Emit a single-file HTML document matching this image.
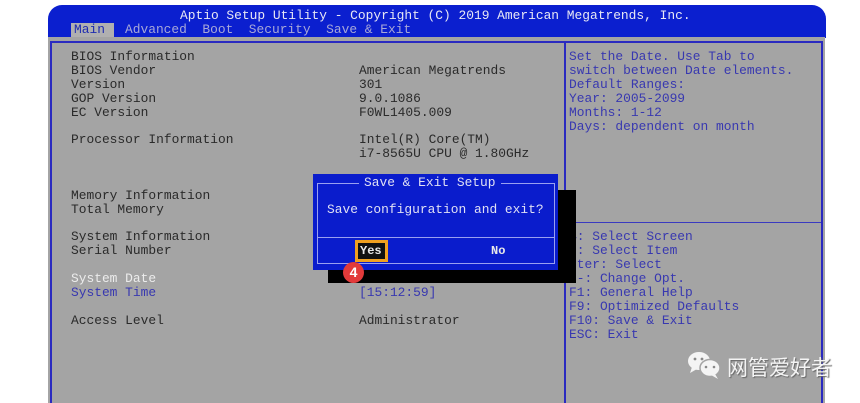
<!DOCTYPE html>
<html><head><meta charset="utf-8"><style>
*{margin:0;padding:0;box-sizing:border-box}
html,body{width:860px;height:403px;overflow:hidden}
body{background:#fff;position:relative;font-family:"Liberation Mono",monospace;font-size:12.9px;}
.a{position:absolute;white-space:pre;line-height:14px}
.d{color:#2a2a2a}.b{color:#3838b0}.w{color:#ececec}
</style></head><body>
<div style="position:absolute;left:48px;top:5px;width:778px;height:33px;background:#0b1fcf;border-radius:14px 14px 0 0"></div>
<div class="a" style="left:180px;top:9px;color:#e8e8f4">Aptio Setup Utility - Copyright (C) 2019 American Megatrends, Inc.</div>
<div style="position:absolute;left:71px;top:23px;width:43px;height:14px;background:#b0b0b0"></div>
<div class="a" style="left:74px;top:23px;color:#1e2bb0">Main</div>
<div class="a" style="left:125px;top:23px;color:#a8a8d8">Advanced  Boot  Security  Save &amp; Exit</div>
<div style="position:absolute;left:48px;top:37px;width:777px;height:366px;background:#a4a4a4"></div>
<div style="position:absolute;left:50px;top:41px;width:773px;height:362px;border:2px solid #2a2ac0;border-bottom:none"></div>
<div style="position:absolute;left:564px;top:41px;width:2px;height:362px;background:#2a2ac0"></div>
<div style="position:absolute;left:566px;top:222px;width:255px;height:1px;background:#3a3ac0"></div>
<div class="a d" style="left:71px;top:50px">BIOS Information
BIOS Vendor
Version
GOP Version
EC Version</div>
<div class="a d" style="left:71px;top:133px">Processor Information</div>
<div class="a d" style="left:71px;top:189px">Memory Information
Total Memory</div>
<div class="a d" style="left:71px;top:230px">System Information
Serial Number</div>
<div class="a w" style="left:71px;top:272px">System Date</div>
<div class="a b" style="left:71px;top:286px">System Time</div>
<div class="a d" style="left:71px;top:314px">Access Level</div>
<div class="a d" style="left:359px;top:64px">American Megatrends
301
9.0.1086
F0WL1405.009</div>
<div class="a d" style="left:359px;top:133px">Intel(R) Core(TM)
i7-8565U CPU @ 1.80GHz</div>
<div class="a b" style="left:359px;top:286px">[15:12:59]</div>
<div class="a d" style="left:359px;top:314px">Administrator</div>
<div class="a b" style="left:569px;top:50px">Set the Date. Use Tab to
switch between Date elements.
Default Ranges:
Year: 2005-2099
Months: 1-12
Days: dependent on month</div>
<div class="a b" style="left:569px;top:230px">→: Select Screen
↓: Select Item
nter: Select
/-: Change Opt.
F1: General Help
F9: Optimized Defaults
F10: Save &amp; Exit
ESC: Exit</div>
<div style="position:absolute;left:328px;top:190px;width:248px;height:93px;background:#000"></div>
<div style="position:absolute;left:313px;top:174px;width:245px;height:96px;background:#0a1ccc"></div>
<div style="position:absolute;left:317px;top:183px;width:238px;height:81px;border:1px solid #9aa0f0"></div>
<div style="position:absolute;left:318px;top:237px;width:236px;height:1px;background:#9aa0f0"></div>
<div class="a" style="left:359px;top:176px;background:#0a1ccc;color:#e0e0f4;padding:0 5px">Save &amp; Exit Setup</div>
<div class="a" style="left:327px;top:203px;color:#e0e0f4">Save configuration and exit?</div>
<div style="position:absolute;left:355px;top:240px;width:33px;height:22px;border:3px solid #f0a020;background:#111"></div>
<div class="a" style="left:360px;top:244px;color:#e8e8e8;font-weight:bold;font-size:12px">Yes</div>
<div class="a" style="left:491px;top:244px;color:#e8e8e8;font-weight:bold;font-size:12px">No</div>
<div style="position:absolute;left:343px;top:262px;width:21px;height:21px;border-radius:50%;background:#e23a3a;color:#fff;font-family:'Liberation Sans',sans-serif;font-weight:bold;font-size:14px;text-align:center;line-height:21px">4</div>
<svg style="position:absolute;left:687px;top:350px" width="36" height="30" viewBox="0 0 36 30">
<ellipse cx="12" cy="11" rx="11" ry="9" fill="#f4f4f4"/><path d="M5 17 L3 23 L10 19Z" fill="#f4f4f4"/>
<ellipse cx="23" cy="18" rx="10" ry="8.5" fill="#f4f4f4" stroke="#a4a4a4" stroke-width="1.5"/><path d="M28 24 L31 29 L24 25Z" fill="#f4f4f4"/>
<circle cx="8" cy="9" r="1.4" fill="#888"/><circle cx="15" cy="9" r="1.4" fill="#888"/>
<circle cx="19" cy="17" r="1.3" fill="#888"/><circle cx="27" cy="17" r="1.3" fill="#888"/></svg>
<div style="position:absolute;left:727px;top:352px;font-family:'Liberation Sans','Noto Sans CJK SC',sans-serif;font-size:21px;color:#f4f4f4;text-shadow:1px 1px 1px #666;white-space:nowrap">网管爱好者</div>
</body></html>
